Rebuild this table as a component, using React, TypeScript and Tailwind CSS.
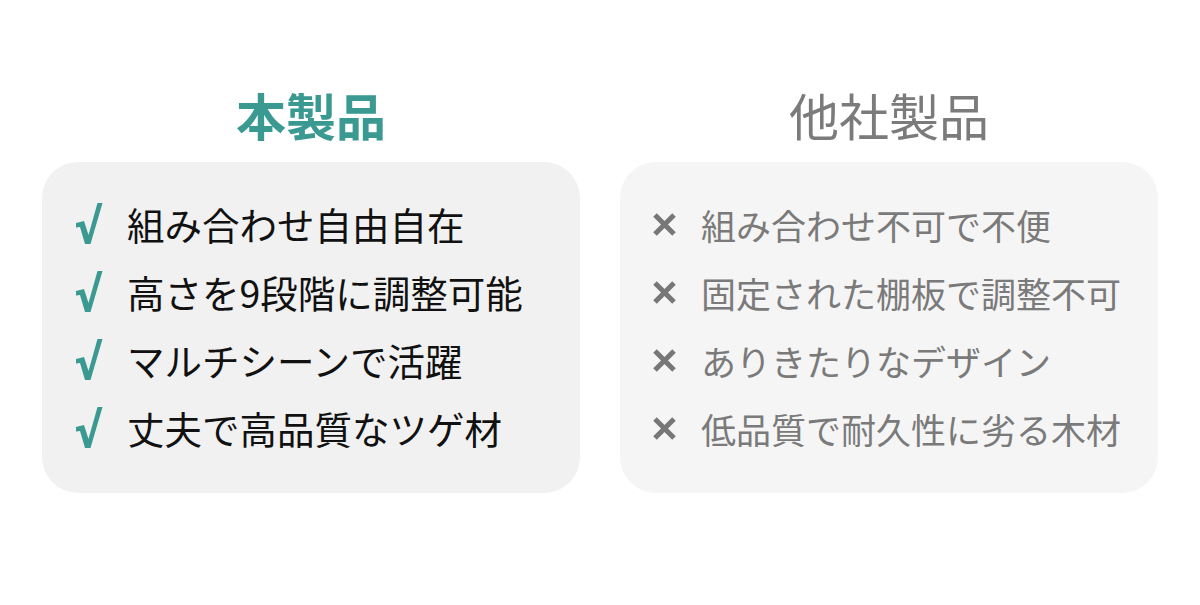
import React from 'react';

const ours = [
  '組み合わせ自由自在',
  '高さを9段階に調整可能',
  'マルチシーンで活躍',
  '丈夫で高品質なツゲ材',
];

const theirs = [
  '組み合わせ不可で不便',
  '固定された棚板で調整不可',
  'ありきたりなデザイン',
  '低品質で耐久性に劣る木材',
];

const font = { fontFamily: '"Noto Sans CJK JP", "Noto Sans", sans-serif' };

const Check = () => (
  <svg width="28" height="44" viewBox="0 0 28 44" className="shrink-0">
    <path d="M1 21 L9 19 L13.5 33 L22.5 1 L27.5 1 L15.5 42 L10 42 L5 25 L1 25.5 Z" fill="#3a9a92" />
  </svg>
);

const Cross = () => (
  <svg width="25" height="25" viewBox="0 0 25 25" className="shrink-0">
    <path d="M3 3 L22 22 M22 3 L3 22" stroke="#777777" strokeWidth="5" />
  </svg>
);

export default function App() {
  return (
    <div className="w-[1200px] h-[605px] bg-white" style={font}>
      <div className="flex gap-10 px-[42px] pt-[84px]">
        {/* 本製品 */}
        <div className="w-[538px] flex flex-col">
          <div className="h-[60px] flex items-center justify-center text-[50px] font-bold text-[#3a9a92] leading-none">
            本製品
          </div>
          <div className="mt-[18px] h-[331px] rounded-[36px] bg-[#f1f1f1] pt-[28px]">
            {ours.map((t) => (
              <div key={t} className="h-[68px] flex items-center">
                <div className="w-[85px] pl-[33px] flex items-center">
                  <Check />
                </div>
                <span className="text-[37.5px] leading-none text-[#111111]">{t}</span>
              </div>
            ))}
          </div>
        </div>

        {/* 他社製品 */}
        <div className="w-[538px] flex flex-col">
          <div className="h-[60px] flex items-center justify-center text-[50px] text-[#7b7b7b] leading-none">
            他社製品
          </div>
          <div className="mt-[18px] h-[331px] rounded-[36px] bg-[#f5f5f5] pt-[28px]">
            {theirs.map((t) => (
              <div key={t} className="h-[68px] flex items-center">
                <div className="w-[81px] pl-[32px] flex items-center">
                  <Cross />
                </div>
                <span className="text-[35px] leading-none text-[#7a7a7a]">{t}</span>
              </div>
            ))}
          </div>
        </div>
      </div>
    </div>
  );
}
